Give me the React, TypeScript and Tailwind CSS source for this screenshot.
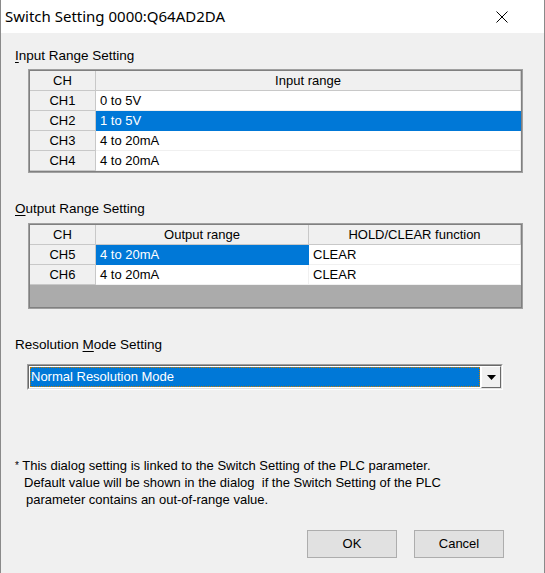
import React from "react";

const font = { fontFamily: '"Liberation Sans", Arial, sans-serif' };

function HeadCell({ w, children, grow }: { w?: string; children: React.ReactNode; grow?: boolean }) {
  return (
    <div
      className={`${grow ? "flex-1" : w} h-full flex items-center justify-center bg-[#f0f0f0] border-r border-b border-[#c8c8c8] text-[13px] text-black`}
    >
      {children}
    </div>
  );
}

function Cell({ w, grow, sel, children }: { w?: string; grow?: boolean; sel?: boolean; children: React.ReactNode }) {
  return (
    <div
      className={`${grow ? "flex-1" : w} h-full flex items-center pl-[4px] border-r border-b ${
        sel ? "bg-[#0078d7] text-white border-[#0078d7]" : "bg-white text-black border-[#f0f0f0]"
      } text-[13px]`}
    >
      {children}
    </div>
  );
}

export default function App() {
  const inputRows = [
    ["CH1", "0 to 5V", false],
    ["CH2", "1 to 5V", true],
    ["CH3", "4 to 20mA", false],
    ["CH4", "4 to 20mA", false],
  ] as const;
  const outputRows = [
    ["CH5", "4 to 20mA", "CLEAR", true],
    ["CH6", "4 to 20mA", "CLEAR", false],
  ] as const;

  return (
    <div className="w-[545px] h-[573px] bg-[#f0f0f0] border-x border-[#8a8a8a] flex flex-col overflow-hidden" style={font}>
      <div className="h-[33px] bg-white flex items-center justify-between pl-[4px] pr-[36px] shrink-0">
        <span className="text-[15px] text-black" style={{ fontFamily: '"Noto Sans", "Open Sans", sans-serif' }}>
          Switch Setting 0000:Q64AD2DA
        </span>
        <svg width="12" height="12" viewBox="0 0 12 12">
          <path d="M0.5 0.5 L11.5 11.5 M11.5 0.5 L0.5 11.5" stroke="#000" strokeWidth="1" />
        </svg>
      </div>

      <div className="flex flex-col px-[14px] text-[13.5px] text-black">
        <div className="mt-[15px] h-[16px] leading-[16px]">
          <span className="underline underline-offset-2">I</span>nput Range Setting
        </div>
        <div className="mt-[5px] ml-[13px] w-[495px] border border-[#a0a0a0]">
          <div className="border border-[#808080] bg-white">
            <div className="flex h-[20px]">
              <HeadCell w="w-[66px]">CH</HeadCell>
              <HeadCell grow>Input range</HeadCell>
            </div>
            {inputRows.map(([ch, v, sel]) => (
              <div key={ch} className="flex h-[20px]">
                <HeadCell w="w-[66px]">{ch}</HeadCell>
                <Cell grow sel={sel}>{v}</Cell>
              </div>
            ))}
          </div>
        </div>

        <div className="mt-[28px] h-[16px] leading-[16px]">
          <span className="underline underline-offset-2">O</span>utput Range Setting
        </div>
        <div className="mt-[6px] ml-[13px] w-[495px] border border-[#a0a0a0]">
          <div className="border border-[#808080] bg-[#ababab]">
            <div className="flex h-[20px]">
              <HeadCell w="w-[66px]">CH</HeadCell>
              <HeadCell w="w-[213px]">Output range</HeadCell>
              <HeadCell grow>HOLD/CLEAR function</HeadCell>
            </div>
            {outputRows.map(([ch, v, f, sel]) => (
              <div key={ch} className="flex h-[20px]">
                <HeadCell w="w-[66px]">{ch}</HeadCell>
                <Cell w="w-[213px]" sel={sel}>{v}</Cell>
                <Cell grow>{f}</Cell>
              </div>
            ))}
            <div className="h-[22px]" />
          </div>
        </div>

        <div className="mt-[28px] h-[16px] leading-[16px]">
          Resolution <span className="underline underline-offset-2">M</span>ode Setting
        </div>
        <div className="mt-[11px] ml-[12px] w-[476px] h-[26px] flex border border-t-[#a0a0a0] border-l-[#a0a0a0] border-b-white border-r-white">
          <div className="flex-1 flex border border-t-[#696969] border-l-[#696969] border-b-[#e3e3e3] border-r-[#e3e3e3] bg-white">
            <div className="flex-1 m-[1px] bg-[#0078d7] outline-1 outline-dotted outline-[#c27a00] -outline-offset-1 flex items-center pl-[1px] text-white text-[13px]">
              Normal Resolution Mode
            </div>
            <div className="w-[20px] h-full bg-[#f0f0f0] border border-t-white border-l-white border-b-[#696969] border-r-[#696969] flex items-center justify-center">
              <svg width="9" height="5" viewBox="0 0 9 5">
                <path d="M0 0 H9 L4.5 5 Z" fill="#000" />
              </svg>
            </div>
          </div>
        </div>

        <div className="mt-[67px] text-[13px] leading-[17px]">
          <div><span className="text-[10px] align-top">*</span> This dialog setting is linked to the Switch Setting of the PLC parameter.</div>
          <div className="pl-[9px]">Default value will be shown in the dialog&nbsp; if the Switch Setting of the PLC</div>
          <div className="pl-[11px]">parameter contains an out-of-range value.</div>
        </div>

        <div className="mt-[22px] flex justify-end gap-[17px] pr-[26px]">
          <button className="w-[90px] h-[28px] bg-[#e1e1e1] border border-[#adadad] text-[13px] text-black flex items-center justify-center">
            OK
          </button>
          <button className="w-[90px] h-[28px] bg-[#e1e1e1] border border-[#adadad] text-[13px] text-black flex items-center justify-center">
            Cancel
          </button>
        </div>
      </div>
    </div>
  );
}
